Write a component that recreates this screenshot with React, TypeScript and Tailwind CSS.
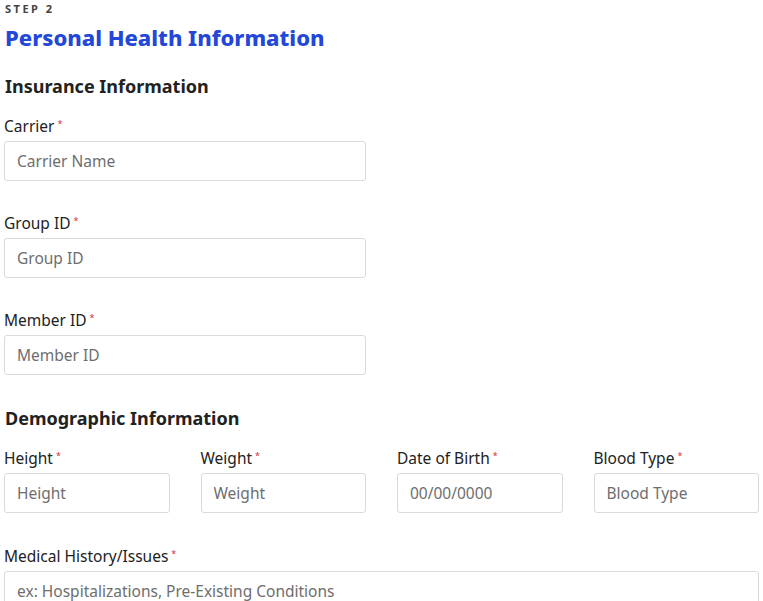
import React from "react";

function Label({ text }: { text: string }) {
  return (
    <label className="block text-[15.5px] leading-5 text-[#222] mb-[5px]">
      {text}
      <sup className="ml-[3px] text-[9px] text-[#d32f3c] relative -top-[5px]">*</sup>
    </label>
  );
}

function Field({ label, placeholder, className = "" }: { label: string; placeholder: string; className?: string }) {
  return (
    <div className={className}>
      <Label text={label} />
      <input
        type="text"
        placeholder={placeholder}
        className="w-full h-10 px-3 border border-[#dadada] rounded-[3px] text-[15.5px] text-[#333] placeholder:text-[#6e6e6e] bg-white outline-none"
      />
    </div>
  );
}

export default function App() {
  return (
    <div className="min-h-screen bg-white pl-[4px] pr-[4px] pt-[2px] font-['Noto_Sans',_sans-serif]">
      <div className="w-[755px]">
        <div className="pl-[1px] text-[11px] font-bold tracking-[2.5px] text-[#444] leading-[14px]">STEP 2</div>
        <h1 className="pl-[1px] mt-[6px] text-[22px] leading-[30px] font-extrabold text-[#2347d6]">
          Personal Health Information
        </h1>

        <h2 className="pl-[1px] mt-[21px] text-[18px] leading-[26px] font-bold text-[#222]">Insurance Information</h2>
        <div className="mt-[17px] grid grid-cols-4 gap-x-[32px] gap-y-[32px]">
          <Field className="col-span-2 col-start-1" label="Carrier" placeholder="Carrier Name" />
          <Field className="col-span-2 col-start-1" label="Group ID" placeholder="Group ID" />
          <Field className="col-span-2 col-start-1" label="Member ID" placeholder="Member ID" />
        </div>

        <h2 className="pl-[1px] mt-[30px] text-[18px] leading-[26px] font-bold text-[#222]">Demographic Information</h2>
        <div className="mt-[17px] grid grid-cols-4 gap-x-[31px]">
          <Field label="Height" placeholder="Height" />
          <Field label="Weight" placeholder="Weight" />
          <Field label="Date of Birth" placeholder="00/00/0000" />
          <Field label="Blood Type" placeholder="Blood Type" />
        </div>

        <div className="mt-[33px]">
          <Label text="Medical History/Issues" />
          <textarea
            placeholder="ex: Hospitalizations, Pre-Existing Conditions"
            className="block w-full h-[90px] px-3 py-[9px] border border-[#dadada] rounded-[3px] text-[15.5px] leading-5 text-[#333] placeholder:text-[#6e6e6e] bg-white outline-none resize-none"
          />
        </div>
      </div>
    </div>
  );
}
